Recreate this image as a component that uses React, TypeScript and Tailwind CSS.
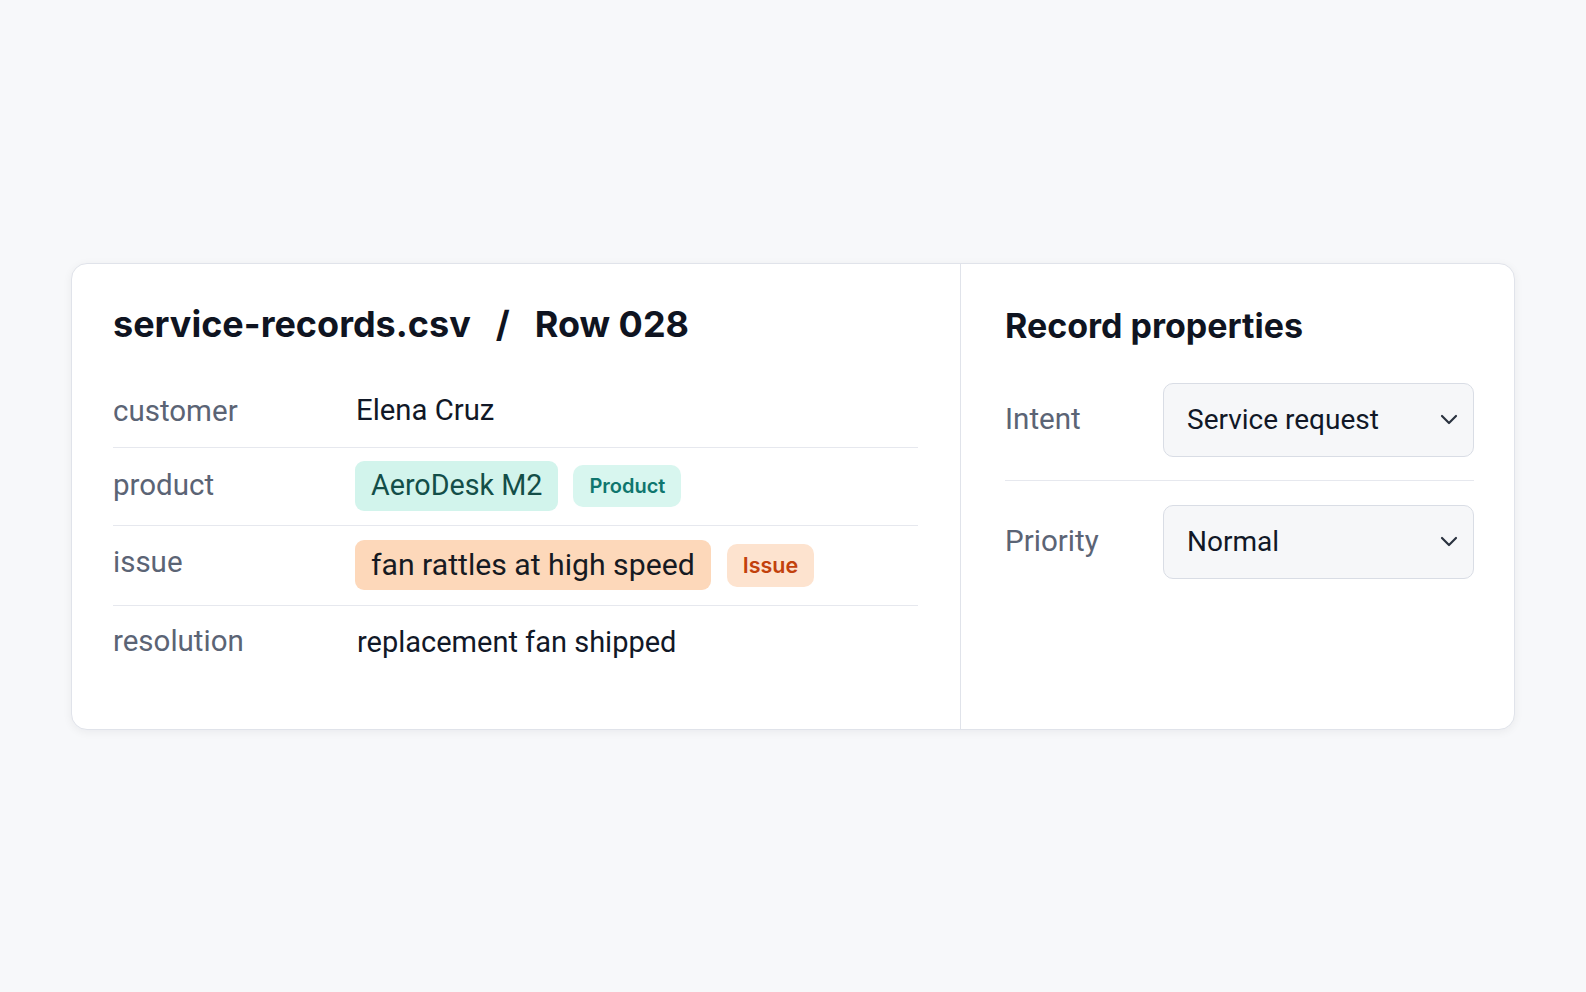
import React from "react";

const Chevron = () => (
  <svg width="18" height="11" viewBox="0 0 18 11" fill="none">
    <path d="M2 2l7 7 7-7" stroke="#2b3340" strokeWidth="2.2" strokeLinecap="round" strokeLinejoin="round" />
  </svg>
);

const Select = ({ value }: { value: string }) => (
  <div className="flex h-[74px] w-[311px] items-center justify-between rounded-[10px] border border-[#d9dde5] bg-[#f6f7f9] pl-[23px] pr-[15px]">
    <span className="text-[28px] text-[#111827]">{value}</span>
    <Chevron />
  </div>
);

export default function App() {
  return (
    <div
      className="flex min-h-screen items-center justify-center bg-[#f7f8fa]"
      style={{ fontFamily: "Roboto, 'Noto Sans', sans-serif" }}
    >
      <div className="flex w-[1444px] rounded-[16px] border border-[#e0e3ea] bg-white shadow-[0_2px_10px_rgba(16,24,40,0.06)]">
        {/* Left panel */}
        <div className="w-[890px] border-r border-[#e0e3ea] pb-[49px] pl-[41px] pr-[42px] pt-[39px]">
          <h1
            className="flex items-center gap-[25px] text-[36px] font-bold leading-[43px] text-[#0f1421]"
            style={{ fontFamily: "Inter, 'Noto Sans', sans-serif" }}
          >
            <span>service-records.csv</span>
            <span>/</span>
            <span>Row 028</span>
          </h1>
          <div className="mt-[24px]">
            <div className="flex h-[78px] items-center border-b border-[#e6e8ee] pt-[6px]">
              <div className="w-[242px] text-[29.5px] text-[#5b6475]">customer</div>
              <div className="pl-[1px] text-[29.3px] text-[#111827]">Elena Cruz</div>
            </div>
            <div className="flex h-[78px] items-center border-b border-[#e6e8ee]">
              <div className="w-[242px] pb-[2px] text-[29.5px] text-[#5b6475]">product</div>
              <div className="flex items-center gap-[15px]">
                <span className="flex h-[50px] items-center rounded-[9px] bg-[#d2f4ec] px-[16px] text-[28.7px] text-[#134e48]">
                  AeroDesk M2
                </span>
                <span
                  className="flex h-[42px] items-center rounded-[10px] bg-[#d8f6ef] px-[16px] text-[20px] font-semibold text-[#0f766e]"
                  style={{ fontFamily: "Inter, 'Noto Sans', sans-serif" }}
                >
                  Product
                </span>
              </div>
            </div>
            <div className="flex h-[80px] items-center border-b border-[#e6e8ee]">
              <div className="w-[242px] pb-[5px] text-[29.5px] text-[#5b6475]">issue</div>
              <div className="flex items-center gap-[16px]">
                <span className="flex h-[50px] items-center rounded-[9px] bg-[#fdd8ba] px-[16px] text-[30.2px] text-[#161a22]">
                  fan rattles at high speed
                </span>
                <span
                  className="flex h-[43px] items-center rounded-[10px] bg-[#fde3cf] px-[16px] text-[21.5px] font-semibold text-[#c2410c]"
                  style={{ fontFamily: "Inter, 'Noto Sans', sans-serif" }}
                >
                  Issue
                </span>
              </div>
            </div>
            <div className="flex h-[74px] items-center">
              <div className="w-[242px] pb-[2px] text-[29.5px] text-[#5b6475]">resolution</div>
              <div className="pl-[2px] text-[29px] text-[#111827]">replacement fan shipped</div>
            </div>
          </div>
        </div>
        {/* Right panel */}
        <div className="flex-1 pl-[44px] pr-[40px] pt-[42px]">
          <h2
            className="text-[34px] font-bold leading-[40px] text-[#0f1421]"
            style={{ fontFamily: "Inter, 'Noto Sans', sans-serif" }}
          >
            Record properties
          </h2>
          <div className="mt-[37px]">
            <div className="flex items-center border-b border-[#e6e8ee] pb-[23px]">
              <div className="w-[158px] text-[29.6px] text-[#5b6475]">Intent</div>
              <Select value="Service request" />
            </div>
            <div className="flex items-center pt-[24px]">
              <div className="w-[158px] text-[29.6px] text-[#5b6475]">Priority</div>
              <Select value="Normal" />
            </div>
          </div>
        </div>
      </div>
    </div>
  );
}
